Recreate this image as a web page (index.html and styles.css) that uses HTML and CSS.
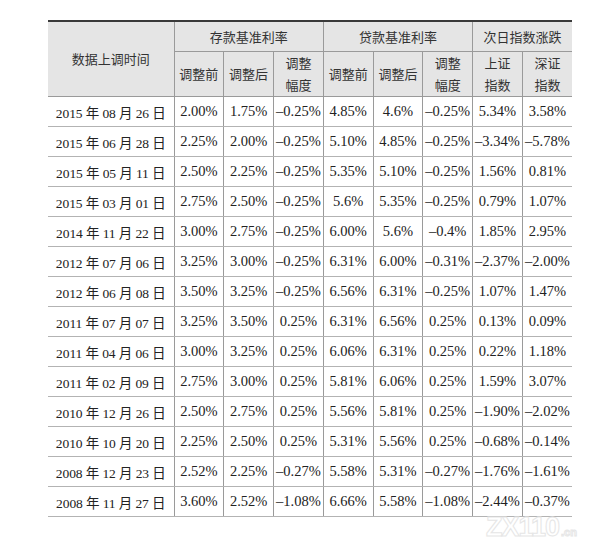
FILE: index.html
```html
<!DOCTYPE html>
<html lang="zh-CN">
<head>
<meta charset="utf-8">
<title>存贷款基准利率调整</title>
<link rel="stylesheet" href="styles.css">
</head>
<body>
<div class="page">
  <table class="rates">
    <colgroup>
      <col class="c-date">
      <col class="c-num"><col class="c-num"><col class="c-num">
      <col class="c-num"><col class="c-num"><col class="c-num">
      <col class="c-num"><col class="c-num">
    </colgroup>
    <thead>
      <tr class="h1">
        <th rowspan="2" class="first">数据上调时间</th>
        <th colspan="3">存款基准利率</th>
        <th colspan="3">贷款基准利率</th>
        <th colspan="2" class="last">次日指数涨跌</th>
      </tr>
      <tr class="h2">
        <th>调整前</th>
        <th>调整后</th>
        <th>调整<br>幅度</th>
        <th>调整前</th>
        <th>调整后</th>
        <th>调整<br>幅度</th>
        <th>上证<br>指数</th>
        <th class="last">深证<br>指数</th>
      </tr>
    </thead>
    <tbody>
      <tr><td class="first">2015 年 08 月 26 日</td><td>2.00%</td><td>1.75%</td><td>–0.25%</td><td>4.85%</td><td>4.6%</td><td>–0.25%</td><td>5.34%</td><td class="last">3.58%</td></tr>
      <tr><td class="first">2015 年 06 月 28 日</td><td>2.25%</td><td>2.00%</td><td>–0.25%</td><td>5.10%</td><td>4.85%</td><td>–0.25%</td><td>–3.34%</td><td class="last">–5.78%</td></tr>
      <tr><td class="first">2015 年 05 月 11 日</td><td>2.50%</td><td>2.25%</td><td>–0.25%</td><td>5.35%</td><td>5.10%</td><td>–0.25%</td><td>1.56%</td><td class="last">0.81%</td></tr>
      <tr><td class="first">2015 年 03 月 01 日</td><td>2.75%</td><td>2.50%</td><td>–0.25%</td><td>5.6%</td><td>5.35%</td><td>–0.25%</td><td>0.79%</td><td class="last">1.07%</td></tr>
      <tr><td class="first">2014 年 11 月 22 日</td><td>3.00%</td><td>2.75%</td><td>–0.25%</td><td>6.00%</td><td>5.6%</td><td>–0.4%</td><td>1.85%</td><td class="last">2.95%</td></tr>
      <tr><td class="first">2012 年 07 月 06 日</td><td>3.25%</td><td>3.00%</td><td>–0.25%</td><td>6.31%</td><td>6.00%</td><td>–0.31%</td><td>–2.37%</td><td class="last">–2.00%</td></tr>
      <tr><td class="first">2012 年 06 月 08 日</td><td>3.50%</td><td>3.25%</td><td>–0.25%</td><td>6.56%</td><td>6.31%</td><td>–0.25%</td><td>1.07%</td><td class="last">1.47%</td></tr>
      <tr><td class="first">2011 年 07 月 07 日</td><td>3.25%</td><td>3.50%</td><td>0.25%</td><td>6.31%</td><td>6.56%</td><td>0.25%</td><td>0.13%</td><td class="last">0.09%</td></tr>
      <tr><td class="first">2011 年 04 月 06 日</td><td>3.00%</td><td>3.25%</td><td>0.25%</td><td>6.06%</td><td>6.31%</td><td>0.25%</td><td>0.22%</td><td class="last">1.18%</td></tr>
      <tr><td class="first">2011 年 02 月 09 日</td><td>2.75%</td><td>3.00%</td><td>0.25%</td><td>5.81%</td><td>6.06%</td><td>0.25%</td><td>1.59%</td><td class="last">3.07%</td></tr>
      <tr><td class="first">2010 年 12 月 26 日</td><td>2.50%</td><td>2.75%</td><td>0.25%</td><td>5.56%</td><td>5.81%</td><td>0.25%</td><td>–1.90%</td><td class="last">–2.02%</td></tr>
      <tr><td class="first">2010 年 10 月 20 日</td><td>2.25%</td><td>2.50%</td><td>0.25%</td><td>5.31%</td><td>5.56%</td><td>0.25%</td><td>–0.68%</td><td class="last">–0.14%</td></tr>
      <tr><td class="first">2008 年 12 月 23 日</td><td>2.52%</td><td>2.25%</td><td>–0.27%</td><td>5.58%</td><td>5.31%</td><td>–0.27%</td><td>–1.76%</td><td class="last">–1.61%</td></tr>
      <tr><td class="first">2008 年 11 月 27 日</td><td>3.60%</td><td>2.52%</td><td>–1.08%</td><td>6.66%</td><td>5.58%</td><td>–1.08%</td><td>–2.44%</td><td class="last">–0.37%</td></tr>
    </tbody>
  </table>
  <div class="watermark"><span class="wm-big">ZX110</span><span class="wm-small">.cn</span></div>
</div>
</body>
</html>
```

FILE: styles.css
```css
html, body {
  margin: 0;
  padding: 0;
  background: #ffffff;
}

.page {
  position: relative;
  width: 616px;
  height: 554px;
  padding: 20px 0 0 48px;
  box-sizing: border-box;
}

.rates {
  border-collapse: collapse;
  table-layout: fixed;
  width: 524px;
  border-top: 2px solid #3a3a3a;
  color: #222222;
}

.c-date { width: 126px; }
.c-num { width: 49.75px; }

.rates th {
  background: #e5e5e5;
  font-family: "Noto Sans CJK SC", "Noto Sans", sans-serif;
  font-weight: normal;
  font-size: 13px;
  color: #333333;
  padding: 0;
  text-align: center;
  border: 1px solid #9a9a9a;
  line-height: 22px;
}

.rates tr.h1 th {
  height: 29px;
  border-top: none;
}

.rates tr.h2 th {
  height: 42px;
}

.rates td {
  font-family: "Liberation Serif", "Noto Sans CJK SC", serif;
  font-size: 14.5px;
  text-align: center;
  padding: 0;
  height: 29px;
  border-left: 1px solid #9a9a9a;
  border-right: 1px solid #9a9a9a;
  border-bottom: 1px solid #b3b3b3;
  white-space: nowrap;
}

.rates td.first {
  font-size: 13.5px;
  letter-spacing: -0.1px;
}

.rates .first { border-left: none; }
.rates .last { border-right: none; }

.watermark {
  position: absolute;
  left: 486px;
  top: 512px;
  font-family: "Liberation Sans", sans-serif;
  font-weight: bold;
  color: #ffffff;
  -webkit-text-stroke: 1px #e6e6e6;
  white-space: nowrap;
}

.wm-big {
  font-size: 27px;
  letter-spacing: -1px;
}

.wm-small {
  font-size: 11px;
  margin-left: 2px;
}
```
